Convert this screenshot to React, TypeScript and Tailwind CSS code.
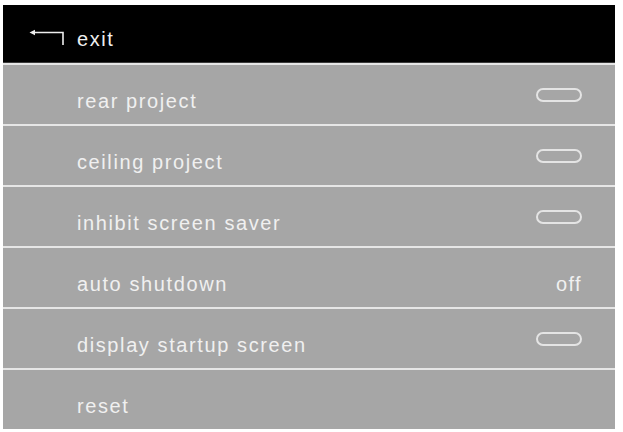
import React from "react"

type Row = { label: string; value?: "toggle" | string }

const rows: Row[] = [
  { label: "rear project", value: "toggle" },
  { label: "ceiling project", value: "toggle" },
  { label: "inhibit screen saver", value: "toggle" },
  { label: "auto shutdown", value: "off" },
  { label: "display startup screen", value: "toggle" },
  { label: "reset" },
]

function BackArrow() {
  return (
    <svg width="36" height="18" viewBox="0 0 36 18" className="text-[#eeeeee]">
      <path d="M5 3.5 H34 V16" fill="none" stroke="currentColor" strokeWidth="1.6" />
      <path d="M0.5 3.5 L6 0.8 L6 6.2 Z" fill="currentColor" />
    </svg>
  )
}

function Pill() {
  return <div className="w-[46px] h-[14px] rounded-full border-2 border-[#e4e4e4]" />
}

export default function App() {
  return (
    <div className="w-[623px] h-[432px] bg-white pt-[5px] pl-[3px] overflow-hidden font-['Liberation_Sans',sans-serif]">
      <div className="w-[612px] bg-[#a6a6a6]">
        {/* header */}
        <div className="h-[58px] bg-black flex items-center border-b border-[#3a3a3a] pt-[12px]">
          <div className="w-[74px] flex justify-end pr-[12px] pb-[4px]">
            <BackArrow />
          </div>
          <span className="text-[20px] tracking-[1.6px] text-[#eeeeee] pb-[2px]">exit</span>
        </div>

        {rows.map((row) => (
          <div
            key={row.label}
            className="h-[61px] border-t-2 border-[#e6e6e6] flex items-center pl-[74px] pr-[33px]"
          >
            <span className="flex-1 text-[20px] tracking-[1.6px] text-[#f0f0f0] pt-[12px]">
              {row.label}
            </span>
            {row.value === "toggle" && <Pill />}
            {row.value && row.value !== "toggle" && (
              <span className="text-[20px] tracking-[1.4px] text-[#f0f0f0] pt-[12px]">{row.value}</span>
            )}
          </div>
        ))}
      </div>
    </div>
  )
}
